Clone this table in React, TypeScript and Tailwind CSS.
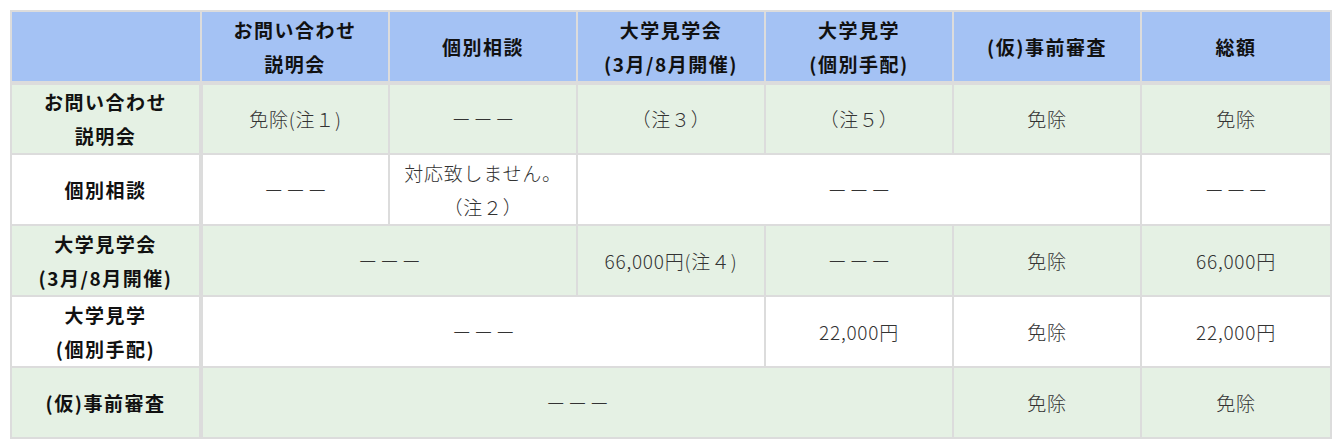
const cellBase = 'border-2 border-[#dcdcdc] text-center align-middle'
const head = `${cellBase} bg-[#a4c2f4] font-bold text-[#111] leading-[34px] text-[19px] tracking-[0.08em]`
const rowHead = `${cellBase} border-r-4 font-bold text-[#111] leading-[34px] text-[19px] tracking-[0.08em]`
const body = `${cellBase} font-light text-[#333] leading-[34px]`

const green = 'bg-[#e5f1e4]'
const white = 'bg-white'

function Dash() {
  return <span className="tracking-[0.15em] pl-[0.15em]">ーーー</span>
}

export default function App() {
  return (
    <div className="bg-white p-[10px] h-[445px]" style={{ fontFamily: '"Noto Sans CJK JP", "Noto Sans", sans-serif' }}>
      <table className="w-[1320px] table-fixed border-collapse text-[19px] tracking-[0.04em]">
        <colgroup>
          <col className="w-[190px]" />
          <col className="w-[188px]" />
          <col className="w-[188px]" />
          <col className="w-[188px]" />
          <col className="w-[188px]" />
          <col className="w-[188px]" />
          <col className="w-[190px]" />
        </colgroup>
        <thead>
          <tr className="h-[72px] border-b-4 border-[#dcdcdc]">
            <th className={`${head} border-r-2`}></th>
            <th className={head}>お問い合わせ<br />説明会</th>
            <th className={head}>個別相談</th>
            <th className={head}>大学見学会<br />(3月/8月開催)</th>
            <th className={head}>大学見学<br />(個別手配)</th>
            <th className={head}>(仮)事前審査</th>
            <th className={head}>総額</th>
          </tr>
        </thead>
        <tbody>
          <tr className={`h-[70px] ${green}`}>
            <th className={rowHead}>お問い合わせ<br />説明会</th>
            <td className={body}>免除(注１)</td>
            <td className={body}><Dash /></td>
            <td className={body}>（注３）</td>
            <td className={body}>（注５）</td>
            <td className={body}>免除</td>
            <td className={body}>免除</td>
          </tr>
          <tr className={`h-[71px] ${white}`}>
            <th className={rowHead}>個別相談</th>
            <td className={body}><Dash /></td>
            <td className={body}>対応致しません。<br />（注２）</td>
            <td className={body} colSpan={3}><Dash /></td>
            <td className={body}><Dash /></td>
          </tr>
          <tr className={`h-[71px] ${green}`}>
            <th className={rowHead}>大学見学会<br />(3月/8月開催)</th>
            <td className={body} colSpan={2}><Dash /></td>
            <td className={body}>66,000円(注４)</td>
            <td className={body}><Dash /></td>
            <td className={body}>免除</td>
            <td className={body}>66,000円</td>
          </tr>
          <tr className={`h-[71px] ${white}`}>
            <th className={rowHead}>大学見学<br />(個別手配)</th>
            <td className={body} colSpan={3}><Dash /></td>
            <td className={body}>22,000円</td>
            <td className={body}>免除</td>
            <td className={body}>22,000円</td>
          </tr>
          <tr className={`h-[71px] ${green}`}>
            <th className={rowHead}>(仮)事前審査</th>
            <td className={body} colSpan={4}><Dash /></td>
            <td className={body}>免除</td>
            <td className={body}>免除</td>
          </tr>
        </tbody>
      </table>
    </div>
  )
}
